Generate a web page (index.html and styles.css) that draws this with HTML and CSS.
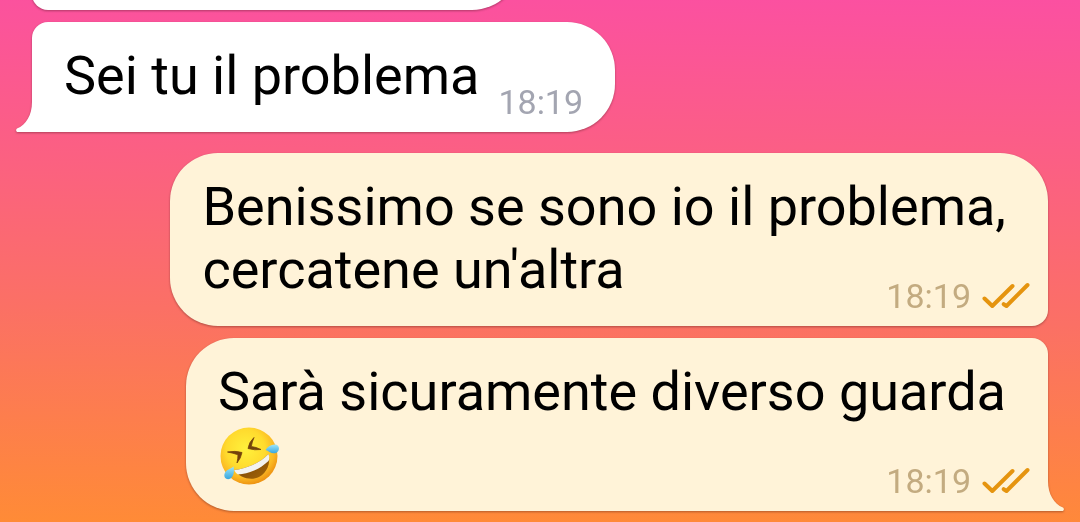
FILE: index.html
```html
<!DOCTYPE html>
<html lang="it">
<head>
<meta charset="utf-8">
<meta name="viewport" content="width=device-width, initial-scale=1">
<title>Chat</title>
<link rel="stylesheet" href="styles.css">
</head>
<body>
<main class="chat">
  <div class="bubble incoming previous"></div>

  <article class="bubble incoming last">
    <p class="text">Sei tu il problema</p>
    <div class="meta"><time>18:19</time></div>
    <svg class="tail" viewBox="0 0 18 30" aria-hidden="true"><path d="M18 0H16C16 13 10 23 1 26.500C-.5 27.500 0 30 2 30H18Z" fill="#fff"/></svg>
  </article>

  <article class="bubble outgoing">
    <p class="text">Benissimo se sono io il problema,<br>cercatene un'altra</p>
    <div class="meta"><time>18:19</time>
      <svg class="checks" viewBox="0 0 48 28" role="img" aria-label="Letto"><path d="M2.500 16.500 10.300 24 30.500 4M21.700 22.200 24.500 24 45.500 3"/></svg>
    </div>
  </article>

  <article class="bubble outgoing last">
    <div class="text">Sarà sicuramente diverso guarda
      <svg class="emoji" viewBox="0 0 62 63" role="img" aria-label="Rotolarsi dal ridere">
        <defs>
          <radialGradient id="face" cx=".44" cy=".38" r=".62">
            <stop offset="0" stop-color="#fff13c"/><stop offset=".55" stop-color="#ffdb2e"/><stop offset=".82" stop-color="#fbb823"/><stop offset="1" stop-color="#ee9413"/>
          </radialGradient>
          <linearGradient id="mouth" x1="0" y1="0" x2="1" y2="1">
            <stop offset="0" stop-color="#6b3b06"/><stop offset="1" stop-color="#a76808"/>
          </linearGradient>
          <linearGradient id="tear" x1="0" y1="0" x2="0" y2="1">
            <stop offset="0" stop-color="#9be5fa"/><stop offset="1" stop-color="#38a6de"/>
          </linearGradient>
        </defs>
        <circle cx="31" cy="33" r="28.500" fill="url(#face)"/>
        <path d="M16 47C28 46 42 40 50.500 31C53 40 49 50 41 54C33 58 22 55 16 47Z" fill="url(#mouth)"/>
        <path d="M16 47C28 46 42 40 50.500 31C51.500 34 51.500 36 50.500 38C42 46 31 51 20 51.500C18 50 17 49 16 47Z" fill="#f3f3f0"/>
        <g fill="#74420b" stroke="#74420b" stroke-width=".8" stroke-linejoin="round">
          <path d="M9.500 29Q17 27.500 24 29.500Q23 35 19 40Q20 35 20 31.800Q15 30 9.500 29Z"/>
          <path d="M36 14.500Q31 19 30 25.500Q37 27.500 43 26.500Q38 24 33.300 23.500Q34 19 36 14.500Z"/>
        </g>
        <path d="M47.500 27C50 23 55 20.500 59 22C62 23.500 61.500 28.500 58 30C54 31.500 50.500 28 47.500 27Z" fill="url(#tear)"/>
        <path d="M15.500 43.500C16.500 48 16 53 12.500 55.500C9 57.500 5.500 55 6.500 51C7.500 47 12 46 15.500 43.500Z" fill="url(#tear)"/>
      </svg>
    </div>
    <div class="meta"><time>18:19</time>
      <svg class="checks" viewBox="0 0 48 28" role="img" aria-label="Letto"><path d="M2.500 16.500 10.300 24 30.500 4M21.700 22.200 24.500 24 45.500 3"/></svg>
    </div>
    <svg class="tail" viewBox="0 0 18 30" aria-hidden="true"><path d="M0 0H2C2 13 8 23 17 26.500C18.500 27.500 18 30 16 30H0Z" fill="#fff3d8"/></svg>
  </article>
</main>
</body>
</html>
```
FILE: styles.css
```css
body {
  margin: 0;
  font-family: Roboto, "Liberation Sans", sans-serif;
}

.chat {
  display: flex;
  flex-direction: column;
  gap: 12px;
  box-sizing: border-box;
  height: 100vh;
  padding: 0 32px;
  overflow: hidden;
  background: linear-gradient(181deg, #fb50a1 0%, #fb5f84 30%, #fb7065 60%, #ff8b36 100%);
}

.bubble {
  position: relative;
  flex: none;
  display: grid;
  padding: 22px 18px 10px 32px;
  filter: drop-shadow(0 1px 1px rgba(60, 20, 20, 0.4));
}

.incoming {
  align-self: flex-start;
  grid-template-columns: auto auto;
  column-gap: 19px;
  padding-right: 32px;
  background: #fff;
  border-radius: 16px 48px 48px 16px;
}

.incoming.last {
  border-bottom-left-radius: 0;
}

.previous {
  width: 438px;
  min-height: 78px;
  margin-top: -100px;
  padding-right: 18px;
}

.outgoing {
  align-self: flex-end;
  background: #fff3d8;
  border-radius: 48px 48px 16px 48px;
}

.outgoing.last {
  border-radius: 48px 16px 0 48px;
}

.incoming + .outgoing {
  margin-top: 9px;
}

.text {
  margin: 0 0 15px;
  font-size: 54px;
  line-height: 63px;
  color: #000;
}

.outgoing .text {
  grid-area: 1 / 1;
  padding-right: 24px;
}

.meta {
  display: flex;
  align-items: center;
  align-self: end;
  gap: 11px;
  font-size: 34px;
  line-height: 40px;
  color: #a3a5b1;
}

.outgoing .meta {
  grid-area: 1 / 1;
  justify-self: end;
  color: #c3ab80;
}

.checks {
  width: 48px;
  height: 28px;
  fill: none;
  stroke: #e5940f;
  stroke-width: 4;
  stroke-linecap: round;
  stroke-linejoin: round;
}

.emoji {
  display: block;
  width: 62px;
  height: 63px;
}

.tail {
  position: absolute;
  bottom: 0;
  width: 18px;
  height: 30px;
}

.incoming .tail {
  left: -16px;
}

.outgoing .tail {
  right: -16px;
}
```
